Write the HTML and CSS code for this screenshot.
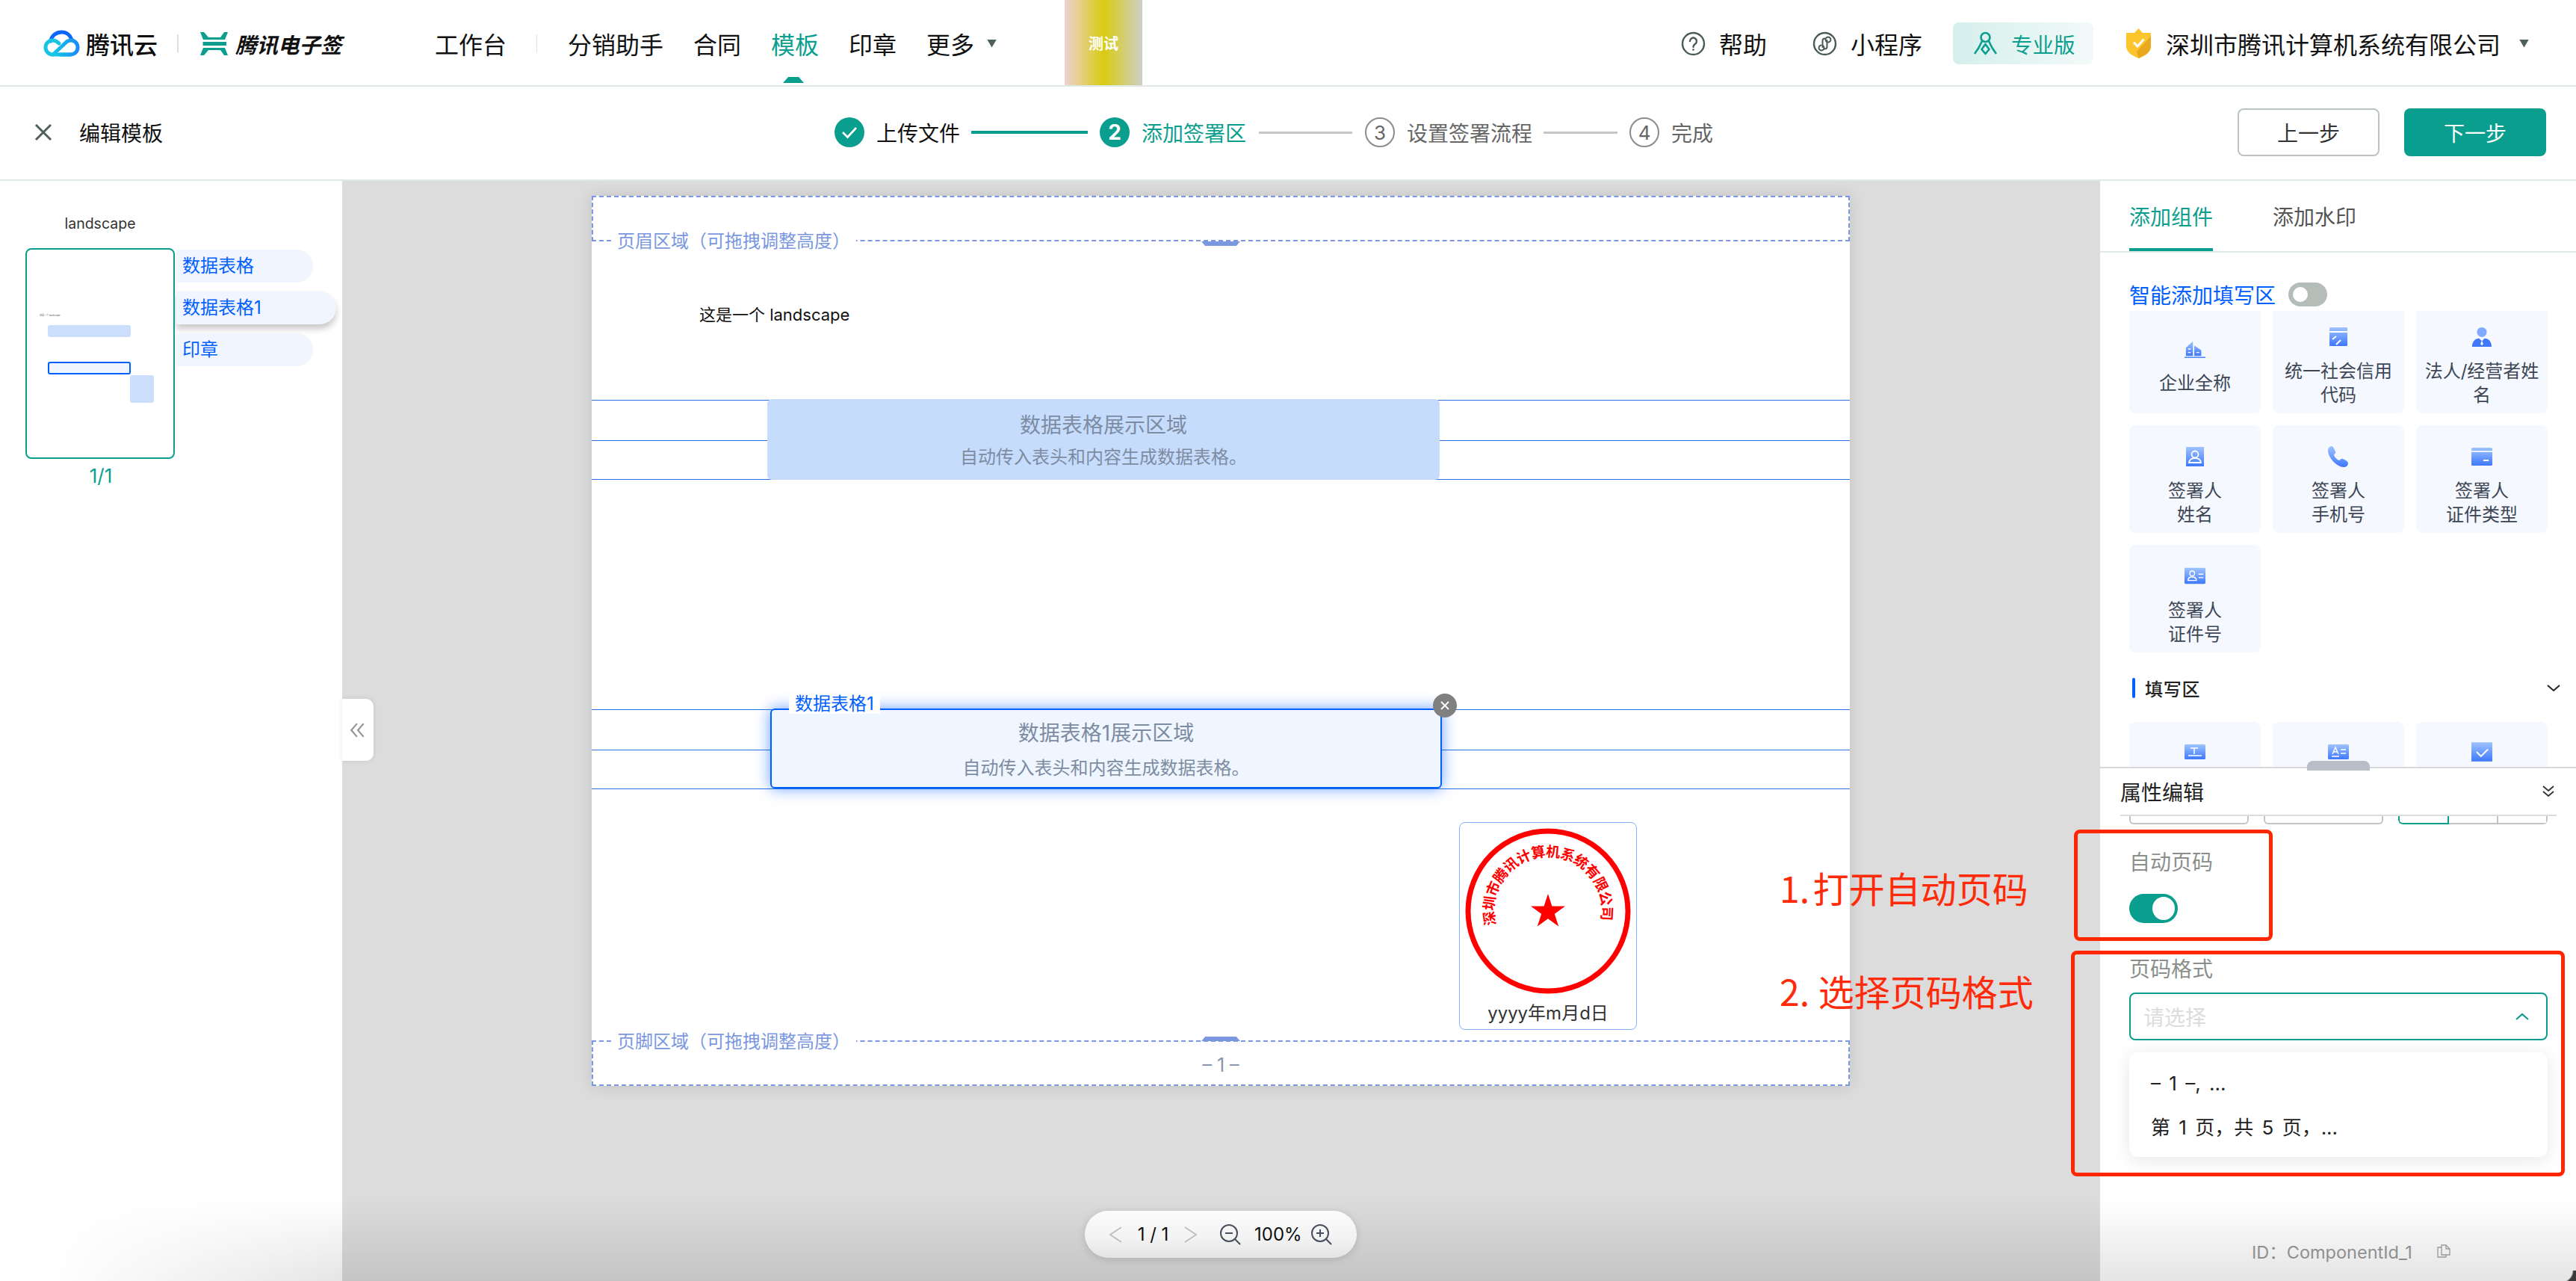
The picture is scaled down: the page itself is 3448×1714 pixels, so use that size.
FILE: index.html
```html
<!DOCTYPE html>
<html lang="zh-CN">
<head>
<meta charset="utf-8">
<title>编辑模板</title>
<link rel="stylesheet" href="styles.css">
</head>
<body>
<svg class="defs" width="0" height="0">
  <defs>
    <linearGradient id="ib" x1="0" y1="0" x2="0" y2="1"><stop offset="0" stop-color="#9fc3ff"/><stop offset="1" stop-color="#3f78fb"/></linearGradient>
    <linearGradient id="cl" x1="0" y1="0" x2="1" y2="0"><stop offset="0" stop-color="#14c8e6"/><stop offset="1" stop-color="#1c8cf5"/></linearGradient>
  </defs>
</svg>

<header class="topbar">
  <svg class="logo-cloud" viewBox="0 0 49 36" fill="none" stroke-width="5" stroke-linecap="round">
    <path d="M10 15C11 7 18 3 24.500 3C31 3 36 7 38 13" stroke="#0a68ff"/>
    <path d="M21 18C18 15 15 14 12.500 14C7 14 3 18 3 23.500C3 29 7.500 33 13 33H36" stroke="#16c4e4"/>
    <path d="M13 33L30 17C32 15 34.500 14 37 14C42 14 46 18 46 23.500C46 29 42 33 36 33H22" stroke="url(#cl)"/>
  </svg>
  <span class="logo-text">腾讯云</span>
  <i class="logo-div"></i>
  <svg class="logo-esign" viewBox="0 0 37 31" fill="#0a9e8e">
    <polygon points="0,0 5,0 11,7 27,7 32,0 37,0 33,10 4,10"/>
    <rect x="3.500" y="13" width="31.500" height="5"/>
    <polygon points="0,31 5,31 11,24 27,24 32,31 37,31 33,21 4,21"/>
  </svg>
  <span class="logo-name">腾讯电子签</span>
  <span class="nav-home">工作台</span>
  <i class="nav-div"></i>
  <nav class="nav">
    <span>分销助手</span>
    <span>合同</span>
    <span class="nav-on">模板</span>
    <span>印章</span>
    <span>更多</span>
  </nav>
  <i class="caret caret-more"></i>
  <div class="env">测试</div>
  <div class="tools">
    <svg class="tool-ic" viewBox="0 0 33 33" fill="none" stroke="#4a5a58" stroke-width="2.400"><circle cx="16.500" cy="16.500" r="14.500"/><path d="M12 13a4.500 4.500 0 1 1 7 3.800c-1.800 1.200-2.500 2-2.500 4" stroke-linecap="round"/><circle cx="16.500" cy="24.500" r="1.300" fill="#4a5a58" stroke="none"/></svg>
    <span class="tool-t1">帮助</span>
    <svg class="tool-ic tool-i2" viewBox="0 0 33 33" fill="none" stroke="#4a5a58" stroke-width="2.400"><circle cx="16.500" cy="16.500" r="14.500"/><path d="M14.500 19.500a3.500 3.500 0 1 1-3-1M18.500 13.500a3.500 3.500 0 1 1 3 1M13.500 21V12.500a3 3 0 0 1 3-3M19.500 12v8.500a3 3 0 0 1-3 3" stroke-width="2" stroke-linecap="round"/></svg>
    <span class="tool-t2">小程序</span>
    <div class="pro">
      <svg class="pro-ic" viewBox="0 0 35 32" fill="none" stroke="#0a9e8e" stroke-width="2.600"><circle cx="17.500" cy="8" r="6"/><path d="M13 13C10 20 7 25 3 30M22 13c3 7 6 12 10 17M17.500 17l-5 7 5 6 5-6z" stroke-linejoin="round"/></svg>
      <span>专业版</span>
    </div>
    <svg class="shield" viewBox="0 0 33 40"><path d="M16.500 0L22 6H33V24C33 32 24 37 16.500 40C9 37 0 32 0 24V6H11Z" fill="#fdc52c"/><path d="M16.500 40C24 37 33 32 33 24V10L14 31Z" fill="#e9a91e"/><path d="M10 18.500l5 5.500 8.500-9.500" fill="none" stroke="#fff" stroke-width="3"/></svg>
    <span class="company">深圳市腾讯计算机系统有限公司</span>
    <i class="caret caret-co"></i>
  </div>
</header>

<section class="subbar">
  <svg class="close-ic" viewBox="0 0 24 24" fill="none" stroke="#4f5f5d" stroke-width="3"><path d="M2 2L22 22M22 2L2 22"/></svg>
  <span class="sub-title">编辑模板</span>
  <div class="steps">
    <span class="dot dot-on"><svg class="dot-check" viewBox="0 0 22 18" fill="none" stroke="#fff" stroke-width="2.600"><path d="M2 9l6.500 6.500L20 3"/></svg></span>
    <span class="step-t">上传文件</span>
    <i class="ln ln-on ln-a"></i>
    <span class="dot dot-on dot-num">2</span>
    <span class="step-t step-cur">添加签署区</span>
    <i class="ln ln-b"></i>
    <span class="dot dot-off">3</span>
    <span class="step-t step-off">设置签署流程</span>
    <i class="ln ln-c"></i>
    <span class="dot dot-off">4</span>
    <span class="step-t step-off">完成</span>
  </div>
  <div class="actions">
    <button class="btn btn-prev">上一步</button>
    <button class="btn btn-next">下一步</button>
  </div>
</section>

<main class="work">
  <aside class="side">
    <div class="side-title">landscape</div>
    <div class="side-row">
      <div class="thumb">
        <span class="t-text">这是一个 landscape</span>
        <i class="t-a"></i>
        <i class="t-b"></i>
        <i class="t-c"></i>
      </div>
      <div class="pills">
        <div class="pill">数据表格</div>
        <div class="pill pill-on">数据表格1</div>
        <div class="pill">印章</div>
      </div>
    </div>
    <div class="side-page">1/1</div>
  </aside>

  <section class="canvas">
    <div class="collapse"><svg viewBox="0 0 20 18" fill="none" stroke="#8a918f" stroke-width="1.800"><path d="M9 1L2 9l7 8M17 1l-7 8 7 8"/></svg></div>
    <div class="page">
      <div class="band band-top"><span class="band-label">页眉区域（可拖拽调整高度）</span><i class="grip grip-top"></i></div>
      <div class="intro">这是一个 landscape</div>
      <i class="rule r1"></i><i class="rule r2"></i><i class="rule r3"></i>
      <i class="rule r4"></i><i class="rule r5"></i><i class="rule r6"></i>
      <div class="tbl tbl-a">
        <div class="tbl-title">数据表格展示区域</div>
        <div class="tbl-sub">自动传入表头和内容生成数据表格。</div>
      </div>
      <div class="tbl tbl-b">
        <div class="tbl-title">数据表格1展示区域</div>
        <div class="tbl-sub">自动传入表头和内容生成数据表格。</div>
        <span class="tbl-tag">数据表格1</span>
        <span class="tbl-x"><svg viewBox="0 0 12 12" fill="none" stroke="#fff" stroke-width="1.800"><path d="M1 1l10 10M11 1L1 11"/></svg></span>
      </div>
      <div class="seal">
        <svg class="seal-svg" viewBox="0 0 236 236">
          <defs><path id="arc" d="M48.500 136A72 72 0 1 1 187.500 136"/></defs>
          <circle cx="118" cy="118" r="107" fill="none" stroke="#ff0000" stroke-width="7"/>
          <polygon fill="#ff0000" points="118,95 123.400,111.500 141,111.500 126.800,121.800 132.200,138.500 118,128.200 103.800,138.500 109.200,121.800 95,111.500 112.600,111.500"/>
          <text class="seal-text"><textPath href="#arc" textLength="258" lengthAdjust="spacing">深圳市腾讯计算机系统有限公司</textPath></text>
        </svg>
        <div class="seal-date">yyyy年m月d日</div>
      </div>
      <div class="band band-bot"><span class="band-label">页脚区域（可拖拽调整高度）</span><i class="grip grip-bot"></i><span class="pageno">– 1 –</span></div>
    </div>
    <div class="pager">
      <svg class="pg-arrow" viewBox="0 0 18 22" fill="none" stroke="#c6c6c6" stroke-width="1.800"><path d="M17 1L2 11l15 10"/></svg>
      <span class="pg-num">1 / 1</span>
      <svg class="pg-arrow" viewBox="0 0 18 22" fill="none" stroke="#c6c6c6" stroke-width="1.800"><path d="M1 1l15 10L1 21"/></svg>
      <svg class="pg-zoom pg-zo" viewBox="0 0 28 28" fill="none" stroke="#4b5261" stroke-width="2"><circle cx="12" cy="12" r="11"/><path d="M20 20l7 7M7 12h10"/></svg>
      <span class="pg-pct">100%</span>
      <svg class="pg-zoom pg-zi" viewBox="0 0 28 28" fill="none" stroke="#4b5261" stroke-width="2"><circle cx="12" cy="12" r="11"/><path d="M20 20l7 7M7 12h10M12 7v10"/></svg>
    </div>
  </section>

  <aside class="panel">
    <div class="tabs">
      <span class="tab tab-on">添加组件</span>
      <span class="tab">添加水印</span>
    </div>
    <div class="smart">
      <span class="smart-t">智能添加填写区</span>
      <i class="sw-off"></i>
    </div>
    <div class="scroll">
      <div class="cards">
        <div class="card"><svg class="c-ic" viewBox="0 0 30 28"><path d="M2 12L12 3V24H2ZM14 9l10 7v8H14Z" fill="url(#ib)"/><path d="M0 26H30" stroke="#4d84fb" stroke-width="1.600"/><path d="M5 14h4M5 19h4M17 19h4" stroke="#fff" stroke-width="1.500"/></svg><span>企业全称</span></div>
        <div class="card"><svg class="c-ic" viewBox="0 0 26 28"><rect x="1" y="1" width="24" height="25" rx="1.500" fill="url(#ib)"/><path d="M1 7h24M5 17l5-4M10 24l6-6" stroke="#fff" stroke-width="2" fill="none"/></svg><span>统一社会信用代码</span></div>
        <div class="card"><svg class="c-ic" viewBox="0 0 28 30"><circle cx="14" cy="8" r="7" fill="#7faaff"/><path d="M0 29c0-8 5-12 10-12l4 4 4-4c5 0 10 4 10 12Z" fill="#4178f8"/><path d="M14 20l-2 5 2 2 2-2z" fill="#fff"/></svg><span>法人/经营者姓名</span></div>
        <div class="card"><svg class="c-ic" viewBox="0 0 26 28"><rect x="1" y="1" width="24" height="26" fill="url(#ib)"/><circle cx="13" cy="11" r="4.500" fill="none" stroke="#fff" stroke-width="1.800"/><path d="M5 22c0-4 4-6 8-6s8 2 8 6z" fill="none" stroke="#fff" stroke-width="1.800"/></svg><span>签署人<br>姓名</span></div>
        <div class="card"><svg class="c-ic" viewBox="0 0 28 28"><path d="M5 0c2 0 4 5 5 7s-2 4-2 5c1 3 4 6 7 7 1 0 3-3 5-2s7 3 7 6c0 3-3 5-6 5C12 28 0 15 0 6 0 3 2 0 5 0Z" fill="url(#ib)"/></svg><span>签署人<br>手机号</span></div>
        <div class="card"><svg class="c-ic" viewBox="0 0 28 26"><rect x="0" y="1" width="28" height="24" rx="1.500" fill="url(#ib)"/><path d="M0 6h28" stroke="#e8f0ff" stroke-width="2"/><path d="M16 18h7" stroke="#fff" stroke-width="2"/></svg><span>签署人<br>证件类型</span></div>
        <div class="card"><svg class="c-ic" viewBox="0 0 30 24"><rect width="30" height="23" rx="1.500" fill="url(#ib)"/><circle cx="11" cy="8" r="3.500" fill="none" stroke="#fff" stroke-width="1.500"/><path d="M5 18c0-4 3-5 6-5s6 1 6 5z" fill="none" stroke="#fff" stroke-width="1.500"/><path d="M20 9h7M20 14h7" stroke="#fff" stroke-width="1.500"/></svg><span>签署人<br>证件号</span></div>
      </div>
      <div class="sec">
        <i class="sec-bar"></i>
        <span class="sec-t">填写区</span>
        <svg class="sec-ch" viewBox="0 0 18 10" fill="none" stroke="#222" stroke-width="2"><path d="M1 1l8 7 8-7"/></svg>
      </div>
      <div class="cards cards-fill">
        <div class="card"><svg class="c-ic" viewBox="0 0 28 20"><rect width="28" height="20" rx="1.500" fill="url(#ib)"/><path d="M8 5h10M13 5v8M5 15h18" stroke="#fff" stroke-width="1.500"/></svg></div>
        <div class="card"><svg class="c-ic" viewBox="0 0 28 20"><rect width="28" height="20" rx="1.500" fill="url(#ib)"/><path d="M6 13l4-9 4 9M7.500 10h5M17 7h7M17 12h7M5 16h10" stroke="#fff" stroke-width="1.400" fill="none"/></svg></div>
        <div class="card"><svg class="c-ic" viewBox="0 0 24 22"><rect width="24" height="22" fill="url(#ib)"/><path d="M6 11l5 5 8-8" stroke="#fff" stroke-width="1.600" fill="none"/></svg></div>
      </div>
    </div>
    <div class="props">
      <i class="props-grip"></i>
      <div class="props-head">
        <span>属性编辑</span>
        <svg class="dbl" viewBox="0 0 16 16" fill="none" stroke="#333" stroke-width="1.800"><path d="M1 1l7 6 7-6M1 8l7 6 7-6"/></svg>
      </div>
      <div class="clip">
        <i class="clip-box"></i>
        <i class="clip-box"></i>
        <div class="clip-seg"><i class="seg seg-on"></i><i class="seg"></i><i class="seg"></i></div>
      </div>
      <div class="lbl lbl-auto">自动页码</div>
      <div class="sw-on"><i></i></div>
      <div class="lbl lbl-fmt">页码格式</div>
      <div class="select">
        <span>请选择</span>
        <svg viewBox="0 0 18 10" fill="none" stroke="#0a9e8e" stroke-width="2.200"><path d="M1 9l8-7 8 7"/></svg>
      </div>
      <div class="drop">
        <div class="opt">– 1 –, ...</div>
        <div class="opt">第 1 页，共 5 页，...</div>
      </div>
      <div class="idrow">
        <span>ID：ComponentId_1</span>
        <svg viewBox="0 0 18 18" fill="none" stroke="#a6a6a6" stroke-width="1.300"><path d="M6 1h6l5 5v8H6zM6 4H1v13h11v-3M12 1v5h5"/></svg>
      </div>
    </div>
  </aside>
</main>

<div class="mark mark-1"></div>
<div class="mark mark-2"></div>
<div class="note note-1">1. 打开自动页码</div>
<div class="note note-2">2. 选择页码格式</div>
<div class="fade"></div>
<div class="corner"></div>
</body>
</html>
```

FILE: styles.css
```css
* { box-sizing: border-box; }
html, body { margin: 0; padding: 0; }
body {
  position: relative;
  width: 3448px;
  height: 1714px;
  overflow: hidden;
  background: #fff;
  color: #111;
  font-family: "Inter", "Noto Sans CJK SC", sans-serif;
}
i { display: block; font-style: normal; }
.defs { position: absolute; }

/* top bar */
.topbar {
  display: flex;
  align-items: center;
  height: 116px;
  padding: 2px 63px 0 58px;
  border-bottom: 2px solid #e0e9e6;
  font-size: 32px;
  white-space: nowrap;
}
.logo-cloud { width: 49px; height: 36px; flex: none; }
.logo-text { margin-left: 8px; width: 96px; font-weight: 500; font-size: 32px; color: #0c0c0c; }
.logo-div { margin-left: 26px; width: 2px; height: 24px; background: #ddd; }
.logo-esign { margin-left: 29px; width: 37px; height: 31px; flex: none; }
.logo-name { margin-left: 10px; width: 144px; font-size: 28.500px; font-weight: 700; font-style: italic; }
.nav-home { margin-left: 123px; width: 96px; }
.nav-div { margin-left: 40px; width: 1px; height: 24px; background: #ddd; }
.nav { display: flex; gap: 40px; margin-left: 41px; }
.nav-on { position: relative; color: #0a9e8e; }
.nav-on::after {
  content: "";
  position: absolute;
  left: 16px;
  bottom: -30px;
  width: 28px;
  height: 8px;
  background: #0a9e8e;
  clip-path: polygon(25% 0, 75% 0, 100% 100%, 0 100%);
}
.caret { width: 13px; height: 11px; background: #4f5f5d; clip-path: polygon(0 0, 100% 0, 50% 100%); }
.caret-more { margin-left: 17px; }
.env {
  margin: -2px 0 0 91px;
  align-self: stretch;
  width: 104px;
  display: flex;
  align-items: center;
  justify-content: center;
  background: linear-gradient(90deg, #edd2d4, #d9cc10 50%, #cdcfc8);
  color: #fff;
  font-size: 20px;
  font-weight: 700;
}
.tools { display: flex; align-items: center; margin-left: auto; }
.tool-ic { width: 33px; height: 33px; flex: none; }
.tool-t1 { margin-left: 18px; width: 66px; }
.tool-i2 { margin-left: 59px; }
.tool-t2 { margin-left: 18px; width: 99px; }
.pro {
  display: flex;
  align-items: center;
  width: 188px;
  height: 56px;
  margin-left: 38px;
  padding-left: 26px;
  border-radius: 8px;
  background: linear-gradient(90deg, #d5efec, #f2faf9);
  color: #0a9e8e;
  font-size: 28.500px;
}
.pro-ic { width: 35px; height: 32px; margin-right: 17px; flex: none; }
.shield { width: 33px; height: 40px; margin-left: 44px; flex: none; }
.company { margin-left: 20px; width: 450px; }
.caret-co { margin-left: 23px; }

/* sub bar */
.subbar {
  display: flex;
  align-items: center;
  height: 126px;
  padding: 0 40px 2px 46px;
  border-bottom: 2px solid #e0e9e6;
}
.close-ic { width: 24px; height: 24px; flex: none; }
.sub-title { margin-left: 36px; width: 112px; font-size: 28px; }
.steps { display: flex; align-items: center; margin-left: 899px; font-size: 28px; }
.dot {
  display: flex;
  align-items: center;
  justify-content: center;
  width: 40px;
  height: 40px;
  border-radius: 50%;
}
.dot-on { background: #0a9e8e; color: #fff; }
.dot-num { font-size: 28px; font-weight: 700; }
.dot-check { width: 22px; height: 18px; }
.dot-off { border: 2px solid #8c8c8c; color: #666; font-size: 26px; }
.step-t { margin-left: 16px; }
.step-cur { color: #0a9e8e; }
.step-off { color: #666; }
.ln { height: 3px; margin-left: 15px; margin-right: 16px; background: #c6c6c6; }
.ln-on { height: 4px; background: #0a9e8e; }
.ln-a { width: 156px; }
.ln-b { width: 125px; margin-right: 17px; margin-left: 17px; }
.ln-c { width: 99px; }
.actions { display: flex; gap: 33px; margin-left: auto; }
.btn {
  width: 190px;
  height: 64px;
  border-radius: 8px;
  font: inherit;
  font-size: 28px;
}
.btn-prev { border: 2px solid #bcc4c1; background: #fff; color: #333; }
.btn-next { border: 0; background: #0a9e8e; color: #fff; }

/* work area */
.work { display: flex; height: 1472px; }

.side { width: 458px; flex: none; padding: 44px 0 0 34px; }
.side-title { width: 200px; height: 26px; text-align: center; font-size: 19.500px; line-height: 26px; color: #333; }
.side-row { display: flex; margin-top: 20px; }
.thumb {
  position: relative;
  width: 200px;
  height: 282px;
  border: 2px solid #0a9e8e;
  border-radius: 8px;
}
.t-text { position: absolute; left: 17px; top: 86px; font-size: 3px; line-height: 5px; color: #555; white-space: nowrap; }
.t-a { position: absolute; left: 28px; top: 101px; width: 111px; height: 16px; border-radius: 3px; background: #cbdffd; }
.t-b { position: absolute; left: 28px; top: 150px; width: 111px; height: 17px; border: 2px solid #0060ff; border-radius: 3px; background: #eff6ff; }
.t-c { position: absolute; left: 138px; top: 168px; width: 32px; height: 37px; border-radius: 3px; background: #cbdffd; }
.pills { display: flex; flex-direction: column; gap: 12px; margin: 2px 0 0 2px; }
.pill {
  width: 183px;
  height: 44px;
  padding-left: 8px;
  border-radius: 0 22px 22px 0;
  background: #f0f5ff;
  color: #0060ff;
  font-size: 24px;
  line-height: 44px;
}
.pill-on { width: 214px; box-shadow: 0 6px 8px rgba(0, 0, 0, .22); }
.side-page { width: 202px; margin-top: 8px; text-align: center; color: #0a9e8e; font-size: 26px; line-height: 30px; }

.canvas {
  position: relative;
  width: 2353px;
  flex: none;
  padding: 20px 0 0 334px;
  background: #dcdcdc;
}
.collapse {
  position: absolute;
  left: 0;
  top: 693px;
  display: flex;
  align-items: center;
  justify-content: center;
  width: 42px;
  height: 83px;
  border-radius: 0 10px 10px 0;
  background: #fff;
  box-shadow: 0 0 6px rgba(0, 0, 0, .1);
}
.collapse svg { width: 22px; height: 20px; }
.page {
  position: relative;
  width: 1684px;
  height: 1191px;
  background: #fff;
  box-shadow: 0 0 20px rgba(0, 0, 0, .12);
}
.band {
  position: absolute;
  left: 0;
  right: 0;
  height: 61px;
  border: 2px dashed #7a97e0;
}
.band-top { top: 0; }
.band-bot { bottom: 0; }
.band-label {
  position: absolute;
  left: 24px;
  padding: 0 8px;
  background: #fff;
  color: #7a97e0;
  font-size: 24px;
  line-height: 30px;
  white-space: nowrap;
}
.band-top .band-label { top: 44px; }
.band-bot .band-label { top: -15px; }
.grip { position: absolute; left: 814px; width: 52px; height: 6px; background: #7a97e0; }
.grip-top { top: 59px; clip-path: polygon(0 0, 100% 0, 90% 100%, 10% 100%); }
.grip-bot { top: -7px; clip-path: polygon(10% 0, 90% 0, 100% 100%, 0 100%); }
.pageno { position: absolute; left: 814px; top: 16px; width: 52px; text-align: center; color: #8896aa; font-size: 25px; line-height: 30px; white-space: nowrap; }
.intro { position: absolute; left: 144px; top: 144px; font-size: 22px; line-height: 30px; color: #111; white-space: nowrap; }
.rule { position: absolute; left: 0; right: 0; height: 1px; background: #2b6fe6; }
.r1 { top: 273px; }
.r2 { top: 327px; }
.r3 { top: 379px; }
.r4 { top: 687px; }
.r5 { top: 741px; }
.r6 { top: 793px; }
.tbl {
  position: absolute;
  display: flex;
  flex-direction: column;
  align-items: center;
  border-radius: 6px;
  color: #7e8ca2;
  text-align: center;
}
.tbl-a { left: 235px; top: 272px; width: 900px; height: 108px; padding-top: 15px; background: #c5dcfd; }
.tbl-b {
  left: 239px;
  top: 686px;
  width: 899px;
  height: 107px;
  padding-top: 11px;
  border: 2px solid #0060ff;
  background: #eff6ff;
  box-shadow: 0 0 20px rgba(0, 96, 255, .6);
}
.tbl-title { font-size: 28px; line-height: 40px; }
.tbl-sub { margin-top: 6px; font-size: 24px; line-height: 34px; }
.tbl-b .tbl-sub { margin-top: 10px; }
.tbl-tag {
  position: absolute;
  left: 23px;
  top: -21px;
  width: 122px;
  height: 26px;
  background: #fff;
  color: #0060ff;
  font-size: 24px;
  line-height: 26px;
}
.tbl-x {
  position: absolute;
  right: -22px;
  top: -22px;
  display: flex;
  align-items: center;
  justify-content: center;
  width: 32px;
  height: 32px;
  border-radius: 50%;
  background: #808080;
}
.tbl-x svg { width: 12px; height: 12px; }
.seal {
  position: absolute;
  left: 1161px;
  top: 838px;
  width: 238px;
  height: 278px;
  border: 1px solid #80b0ff;
  border-radius: 8px;
  text-align: center;
}
.seal-svg { display: block; width: 236px; height: 236px; }
.seal-text { fill: #ff0000; font-family: "Liberation Serif", "Noto Sans CJK SC", serif; font-size: 19px; font-weight: 700; }
.seal-date { margin-top: 4px; font-size: 24px; line-height: 30px; color: #333; white-space: nowrap; }
.pager {
  position: absolute;
  left: 994px;
  top: 1378px;
  display: flex;
  align-items: center;
  width: 364px;
  height: 63px;
  padding-left: 32px;
  border-radius: 32px;
  background: linear-gradient(#fff 60%, #f6f6f6);
  box-shadow: 0 2px 12px rgba(0, 0, 0, .15);
  color: #111;
  font-size: 24px;
  white-space: nowrap;
}
.pg-arrow { width: 18px; height: 22px; flex: none; }
.pg-num { width: 83px; text-align: center; }
.pg-zoom { width: 28px; height: 28px; flex: none; }
.pg-zo { margin-left: 30px; }
.pg-pct { margin-left: 18px; width: 76px; }

/* right panel */
.panel { width: 637px; flex: none; background: #fff; }
.tabs { display: flex; gap: 80px; height: 96px; padding-left: 39px; border-bottom: 2px solid #e0e9e6; }
.tab { height: 94px; padding-top: 29px; font-size: 28px; line-height: 40px; color: #555; }
.tab-on { border-bottom: 4px solid #0a9e8e; color: #0a9e8e; }
.smart { display: flex; align-items: center; gap: 17px; height: 32px; margin-top: 40px; padding-left: 39px; }
.smart-t { color: #0060ff; font-size: 28px; }
.sw-off {
  position: relative;
  width: 52px;
  height: 32px;
  border-radius: 16px;
  background: #b5bdb8;
}
.sw-off::after { content: ""; position: absolute; left: 6px; top: 6px; width: 20px; height: 20px; border-radius: 50%; background: #fff; }
.scroll { height: 610px; margin-top: 6px; padding: 0 38px 0 39px; overflow: hidden; }
.cards { display: grid; grid-template-columns: repeat(3, 176px); grid-auto-rows: 144px; gap: 16px; margin-top: -7px; }
.cards-fill { margin-top: 32px; }
.card {
  display: flex;
  flex-direction: column;
  align-items: center;
  justify-content: center;
  padding: 19px 8px 0;
  border-radius: 8px;
  background: #f5f8fe;
  color: #3c4654;
  font-size: 24px;
  line-height: 32px;
  text-align: center;
}
.cards-fill .card { justify-content: flex-start; padding-top: 26px; }
.c-ic { width: 28px; height: 28px; margin-bottom: 16px; flex: none; }
.sec { display: flex; align-items: center; height: 27px; margin-top: 34px; padding-left: 4px; }
.sec-bar { width: 4px; height: 27px; border-radius: 2px; background: #0060ff; }
.sec-t { margin-left: 13px; font-size: 24px; font-weight: 500; letter-spacing: .8px; color: #222; }
.sec-ch { margin-left: auto; margin-right: -17px; width: 18px; height: 10px; }

.props { position: relative; height: 688px; border-top: 2px solid #d9d9d9; background: #fff; }
.props-grip { position: absolute; left: 277px; top: -10px; width: 84px; height: 13px; border-radius: 8px 8px 0 0; background: #b9bdc8; }
.props-head {
  display: flex;
  align-items: center;
  justify-content: space-between;
  height: 64px;
  margin: 0 26px 0 27px;
  padding-right: 3px;
  border-bottom: 2px solid #ddd;
  font-size: 28px;
  color: #222;
}
.dbl { width: 16px; height: 16px; }
.clip { display: flex; gap: 20px; height: 11px; margin-left: 39px; }
.clip-box, .clip-seg { width: 160px; height: 11px; border: 2px solid #c4c4c4; border-top: 0; border-radius: 0 0 6px 6px; }
.clip-seg { display: flex; width: 200px; margin-left: 0; overflow: hidden; border: 0; }
.seg { flex: 1; border: 2px solid #c4c4c4; border-top: 0; border-left: 0; }
.seg-on { border: 2px solid #0a9e8e; border-top: 0; border-radius: 0 0 0 6px; }
.lbl { margin-left: 39px; color: #8a8f8c; font-size: 28px; line-height: 36px; }
.lbl-auto { margin-top: 33px; }
.lbl-fmt { margin-top: 44px; }
.sw-on {
  position: relative;
  width: 65px;
  height: 39px;
  margin: 24px 0 0 39px;
  border-radius: 20px;
  background: #0a9e8e;
}
.sw-on i { position: absolute; left: 31px; top: 4px; width: 30px; height: 31px; border-radius: 50%; background: #fff; }
.select {
  display: flex;
  align-items: center;
  justify-content: space-between;
  width: 560px;
  height: 64px;
  margin: 13px 0 0 39px;
  padding: 0 23px 0 17px;
  border: 2px solid #0a9e8e;
  border-radius: 8px;
  color: #dcdcdc;
  font-size: 28px;
}
.select svg { width: 18px; height: 10px; }
.drop {
  width: 560px;
  height: 140px;
  margin: 16px 0 0 39px;
  padding: 12px 0 0 29px;
  border-radius: 12px;
  background: #fff;
  box-shadow: 0 4px 24px rgba(0, 0, 0, .1);
}
.opt { height: 59px; font-size: 26px; line-height: 59px; color: #222; word-spacing: 4px; white-space: nowrap; }
.idrow {
  display: flex;
  align-items: center;
  gap: 33px;
  height: 36px;
  margin: 108px 0 0 203px;
  color: #9a9a9a;
  font-size: 23.500px;
}
.idrow svg { width: 18px; height: 18px; }

/* annotations */
.mark { position: absolute; border: 5px solid #ff2600; border-radius: 8px; }
.mark-1 { left: 2776px; top: 1110px; width: 266px; height: 149px; }
.mark-2 { left: 2772px; top: 1272px; width: 661px; height: 302px; }
.note { position: absolute; left: 2382px; color: #ff2a0a; font-size: 48px; line-height: 60px; white-space: nowrap; font-family: "Noto Sans CJK SC", sans-serif; font-weight: 400; }
.note-1 { top: 1157px; word-spacing: -6px; }
.note-2 { top: 1295px; word-spacing: 1px; }

.fade {
  position: absolute;
  left: 0;
  right: 0;
  bottom: 0;
  height: 110px;
  background: linear-gradient(rgba(0, 0, 0, 0), rgba(0, 0, 0, .1));
  -webkit-mask-image: linear-gradient(90deg, transparent 60px, #000 460px);
  mask-image: linear-gradient(90deg, transparent 60px, #000 460px);
  pointer-events: none;
}
.corner {
  position: absolute;
  right: 0;
  bottom: 0;
  width: 20px;
  height: 14px;
  background: radial-gradient(circle at 0 0, transparent 15px, #3a3a3a 17px);
}
```
